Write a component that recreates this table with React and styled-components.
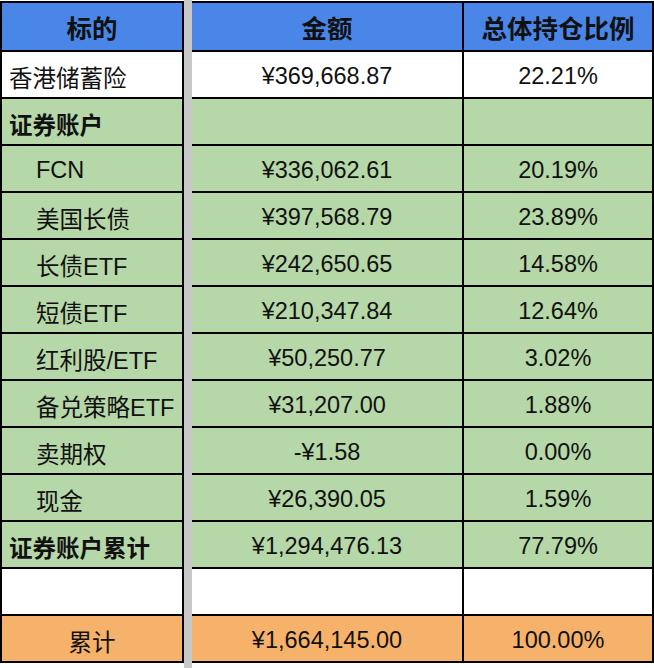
import React from "react";
import styled, { createGlobalStyle } from "styled-components";

const rows = [
  { label: "香港储蓄险", amount: "¥369,668.87", share: "22.21%", tone: "white" },
  { label: "证券账户", bold: true, tone: "green" },
  { label: "FCN", amount: "¥336,062.61", share: "20.19%", tone: "green", indent: true },
  { label: "美国长债", amount: "¥397,568.79", share: "23.89%", tone: "green", indent: true },
  { label: "长债ETF", amount: "¥242,650.65", share: "14.58%", tone: "green", indent: true },
  { label: "短债ETF", amount: "¥210,347.84", share: "12.64%", tone: "green", indent: true },
  { label: "红利股/ETF", amount: "¥50,250.77", share: "3.02%", tone: "green", indent: true },
  { label: "备兑策略ETF", amount: "¥31,207.00", share: "1.88%", tone: "green", indent: true },
  { label: "卖期权", amount: "-¥1.58", share: "0.00%", tone: "green", indent: true },
  { label: "现金", amount: "¥26,390.05", share: "1.59%", tone: "green", indent: true },
  { label: "证券账户累计", bold: true, amount: "¥1,294,476.13", share: "77.79%", tone: "green" },
  { label: "", tone: "white" },
  { label: "累计", amount: "¥1,664,145.00", share: "100.00%", tone: "orange", center: true },
];

const tones = {
  header: "#4a86e8",
  white: "#ffffff",
  green: "#b6d7a8",
  orange: "#f6b26b",
};

export default function App() {
  return (
    <>
      <GlobalStyle />
      <Sheet>
        <Pane $columns="182px" $leftEdge>
          <HeaderCell>标的</HeaderCell>
          {rows.map((r, i) => (
            <Cell
              key={i}
              $tone={r.tone}
              $bold={r.bold}
              $indent={r.indent}
              $align={r.center ? "center" : "flex-start"}
            >
              {r.label}
            </Cell>
          ))}
        </Pane>

        <FreezeBar />

        <Pane $columns="272px 190px">
          <HeaderCell>金额</HeaderCell>
          <HeaderCell>总体持仓比例</HeaderCell>
          {rows.map((r, i) => (
            <React.Fragment key={i}>
              <Cell $tone={r.tone} $align="center">{r.amount}</Cell>
              <Cell $tone={r.tone} $align="center">{r.share}</Cell>
            </React.Fragment>
          ))}
        </Pane>
      </Sheet>
    </>
  );
}

const GlobalStyle = createGlobalStyle`
  html, body { margin: 0; padding: 0; background: #fff; }
  body {
    font-family: "Liberation Sans", "Noto Sans CJK SC", sans-serif;
    color: #111;
  }
`;

const Sheet = styled.div`
  display: flex;
  align-items: flex-start;
  width: 654px;
  height: 668px;
  overflow: hidden;
`;

const Pane = styled.div`
  display: grid;
  grid-template-columns: ${(p) => p.$columns};
  grid-template-rows: 49px repeat(13, 47px);
  margin-top: 1px;
  border-top: 2px solid #000;
  border-left: ${(p) => (p.$leftEdge ? "2px solid #000" : "none")};
`;

const FreezeBar = styled.div`
  width: 8px;
  align-self: stretch;
  background: #c8c8c8;
`;

const Cell = styled.div`
  display: flex;
  align-items: center;
  justify-content: ${(p) => p.$align};
  box-sizing: border-box;
  padding: 4px 0 0 ${(p) => (p.$indent ? "34px" : "7px")};
  ${(p) => p.$align === "center" && "padding-left: 0;"}
  background: ${(p) => tones[p.$tone]};
  border-right: 2px solid #000;
  border-bottom: 2px solid #000;
  font-size: 23.5px;
  font-weight: ${(p) => (p.$bold ? 700 : 400)};
  white-space: nowrap;
`;

const HeaderCell = styled.div`
  display: flex;
  align-items: center;
  justify-content: center;
  box-sizing: border-box;
  background: ${tones.header};
  border-right: 2px solid #000;
  border-bottom: 2px solid #000;
  font-size: 25.5px;
  font-weight: 700;
`;
